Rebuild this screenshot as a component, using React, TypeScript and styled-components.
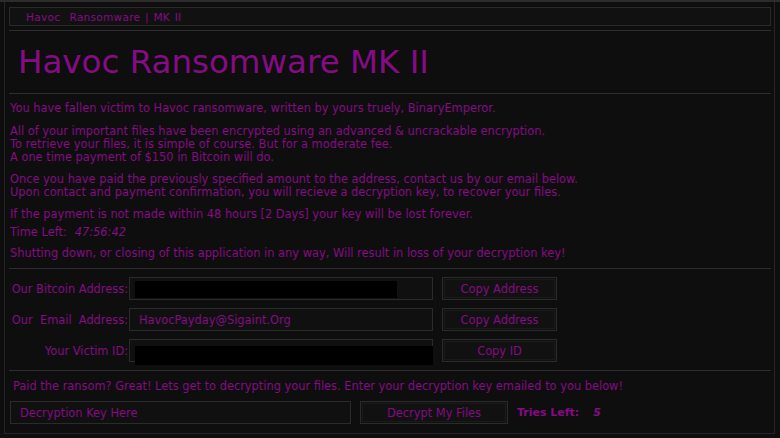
import React from "react";
import styled, { createGlobalStyle } from "styled-components";

const PURPLE = "#850c85";

const Global = createGlobalStyle`
  html, body { margin: 0; padding: 0; background: #0d0d0d; }
  body { width: 780px; height: 438px; overflow: hidden; font-family: "DejaVu Sans", Verdana, sans-serif; }
`;

const Frame = styled.div`
  box-sizing: border-box;
  width: 780px;
  height: 438px;
  background: #0e0e0e;
  border-top: 2px solid #2c2c2c;
  padding: 0 5px 4px 4px;
  display: flex;
`;

const Inner = styled.div`
  flex: 1;
  border-left: 1px solid #262626;
  border-right: 1px solid #262626;
  border-bottom: 1px solid #262626;
  display: flex;
  flex-direction: column;
  padding: 5px 3px 0 4px;
`;

const TitleBar = styled.div`
  height: 17px;
  border: 1px solid #2a2a2a;
  background: #111;
  display: flex;
  align-items: center;
  padding-left: 16px;
  color: ${PURPLE};
  font-size: 10.5px;
  letter-spacing: 0.3px;
  word-spacing: 1px;
`;

const Rule = styled.div<{ $mt: number; $mb: number }>`
  height: 1px;
  background: #2e2e2e;
  margin-top: ${(p) => p.$mt}px;
  margin-bottom: ${(p) => p.$mb}px;
`;

const Heading = styled.h1`
  margin: 0;
  padding-left: 9px;
  font-weight: normal;
  font-size: 32.5px;
  line-height: 38px;
  color: ${PURPLE};
  font-family: "DejaVu Sans", Verdana, sans-serif;
`;

const Body = styled.div`
  padding-left: 1px;
  color: ${PURPLE};
  font-size: 11.4px;
  line-height: 13px;
`;

const Para = styled.p<{ $mb: number }>`
  margin: 0 0 ${(p) => p.$mb}px 0;
`;

const Timer = styled.span`
  font-style: italic;
  margin-left: 8px;
`;

const Form = styled.div`
  display: grid;
  grid-template-columns: 120px 304px 124px;
  row-gap: 8px;
`;

const Label = styled.div`
  color: ${PURPLE};
  font-size: 11.4px;
  text-align: right;
  align-self: center;
  white-space: nowrap;
  padding-right: 1px;
`;

const Field = styled.div`
  position: relative;
  box-sizing: border-box;
  height: 23px;
  border: 1px solid #2b2b2b;
  background: #101010;
  color: ${PURPLE};
  font-size: 11.4px;
  display: flex;
  align-items: center;
  padding-left: 9px;
`;

const Redact = styled.div<{ $w: number; $top: number; $h: number }>`
  position: absolute;
  left: 5px;
  top: ${(p) => p.$top}px;
  width: ${(p) => p.$w}px;
  height: ${(p) => p.$h}px;
  background: #000;
`;

const Btn = styled.div<{ $w?: number; $ml?: number }>`
  box-sizing: border-box;
  height: 23px;
  width: ${(p) => (p.$w ? `${p.$w}px` : "auto")};
  margin-left: ${(p) => p.$ml ?? 0}px;
  border: 1px solid #2b2b2b;
  outline: 1px solid #1a1a1a;
  outline-offset: -3px;
  background: #111;
  color: ${PURPLE};
  font-size: 11.4px;
  display: flex;
  align-items: center;
  justify-content: center;
`;

const Prompt = styled.div`
  color: ${PURPLE};
  font-size: 11.4px;
  padding-left: 4px;
  line-height: 13px;
  margin-bottom: 8px;
`;

const BottomRow = styled.div`
  display: flex;
  align-items: center;
  gap: 9px;
  padding-left: 1px;
`;

const KeyInput = styled.div`
  box-sizing: border-box;
  width: 341px;
  height: 23px;
  border: 1px solid #2b2b2b;
  background: #101010;
  color: ${PURPLE};
  font-size: 11.4px;
  display: flex;
  align-items: center;
  padding-left: 9px;
`;

const Tries = styled.div`
  color: ${PURPLE};
  font-size: 11px;
  font-weight: bold;
  display: flex;
  gap: 14px;
`;

const TriesCount = styled.span`
  font-style: italic;
`;

export default function App() {
  return (
    <>
      <Global />
      <Frame>
        <Inner>
          <TitleBar>Havoc&nbsp; Ransomware | MK II</TitleBar>
          <Rule $mt={4} $mb={12} />
          <Heading>Havoc Ransomware MK II</Heading>
          <Rule $mt={12} $mb={8} />
          <Body>
            <Para $mb={10}>You have fallen victim to Havoc ransomware, written by yours truely, BinaryEmperor.</Para>
            <Para $mb={9}>
              All of your important files have been encrypted using an advanced &amp; uncrackable encryption.
              <br />
              To retrieve your files, it is simple of course. But for a moderate fee.
              <br />
              A one time payment of $150 in Bitcoin will do.
            </Para>
            <Para $mb={9}>
              Once you have paid the previously specified amount to the address, contact us by our email below.
              <br />
              Upon contact and payment confirmation, you will recieve a decryption key, to recover your files.
            </Para>
            <Para $mb={5}>If the payment is not made within 48 hours [2 Days] your key will be lost forever.</Para>
            <Para $mb={8}>
              Time Left:<Timer>47:56:42</Timer>
            </Para>
            <Para $mb={0}>Shutting down, or closing of this application in any way, Will result in loss of your decryption key!</Para>
          </Body>
          <Rule $mt={8} $mb={8} />
          <Form>
            <Label>Our Bitcoin Address:</Label>
            <Field>
              <Redact $w={262} $top={3} $h={17} />
            </Field>
            <Btn $w={115} $ml={9}>Copy Address</Btn>
            <Label>Our&nbsp; Email&nbsp; Address:</Label>
            <Field>HavocPayday@Sigaint.Org</Field>
            <Btn $w={115} $ml={9}>Copy Address</Btn>
            <Label>Your Victim ID:</Label>
            <Field>
              <Redact $w={298} $top={6} $h={19} />
            </Field>
            <Btn $w={115} $ml={9}>Copy ID</Btn>
          </Form>
          <Rule $mt={8} $mb={9} />
          <Prompt>Paid the ransom? Great! Lets get to decrypting your files. Enter your decryption key emailed to you below!</Prompt>
          <BottomRow>
            <KeyInput>Decryption Key Here</KeyInput>
            <Btn $w={148}>Decrypt My Files</Btn>
            <Tries>
              <span>Tries Left:</span>
              <TriesCount>5</TriesCount>
            </Tries>
          </BottomRow>
        </Inner>
      </Frame>
    </>
  );
}
